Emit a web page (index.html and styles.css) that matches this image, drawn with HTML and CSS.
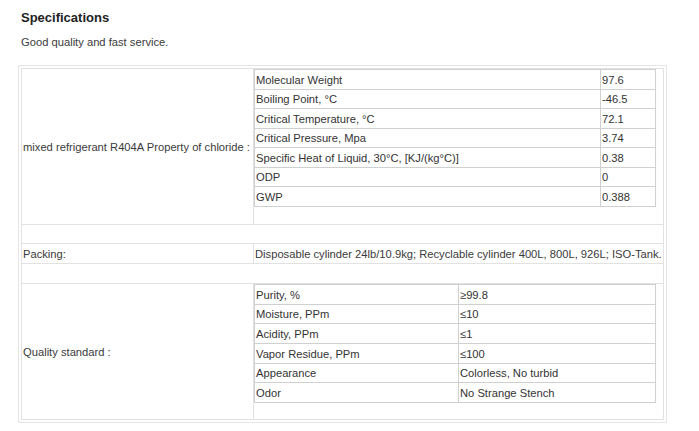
FILE: index.html
```html
<!DOCTYPE html>
<html>
<head>
<meta charset="utf-8">
<link rel="stylesheet" href="styles.css">
</head>
<body>
<div class="page">
  <h2 class="title">Specifications</h2>
  <p class="intro">Good quality and fast service.</p>
  <div class="frame">
    <table class="outer">
      <tr class="r-prop">
        <td class="label">mixed refrigerant R404A Property of chloride :</td>
        <td class="holder">
          <table class="inner inner1">
            <tr class="h20"><td class="k">Molecular Weight</td><td class="v">97.6</td></tr>
            <tr class="h19"><td class="k">Boiling Point, °C</td><td class="v">-46.5</td></tr>
            <tr class="h20"><td class="k">Critical Temperature, °C</td><td class="v">72.1</td></tr>
            <tr class="h19"><td class="k">Critical Pressure, Mpa</td><td class="v">3.74</td></tr>
            <tr class="h20"><td class="k">Specific Heat of Liquid, 30°C, [KJ/(kg°C)]</td><td class="v">0.38</td></tr>
            <tr class="h19"><td class="k">ODP</td><td class="v">0</td></tr>
            <tr class="h20"><td class="k">GWP</td><td class="v">0.388</td></tr>
          </table>
          <div class="spacer"></div>
        </td>
      </tr>
      <tr class="r-empty"><td colspan="2"></td></tr>
      <tr class="r-pack">
        <td class="label">Packing:</td>
        <td class="text">Disposable cylinder 24lb/10.9kg; Recyclable cylinder 400L, 800L, 926L; ISO-Tank.</td>
      </tr>
      <tr class="r-empty2"><td colspan="2"></td></tr>
      <tr class="r-qual">
        <td class="label">Quality standard :</td>
        <td class="holder">
          <table class="inner inner2">
            <tr class="h20"><td class="k">Purity, %</td><td class="v">≥99.8</td></tr>
            <tr class="h19"><td class="k">Moisture, PPm</td><td class="v">≤10</td></tr>
            <tr class="h20"><td class="k">Acidity, PPm</td><td class="v">≤1</td></tr>
            <tr class="h20"><td class="k">Vapor Residue, PPm</td><td class="v">≤100</td></tr>
            <tr class="h19"><td class="k">Appearance</td><td class="v">Colorless, No turbid</td></tr>
            <tr class="h20"><td class="k">Odor</td><td class="v">No Strange Stench</td></tr>
          </table>
          <div class="spacer2"></div>
        </td>
      </tr>
    </table>
  </div>
</div>
</body>
</html>
```

FILE: styles.css
```css
html, body {
  margin: 0;
  padding: 0;
  background: #ffffff;
}
body {
  font-family: "Liberation Sans", Arial, sans-serif;
  color: #333333;
  font-size: 11.2px;
}
.page {
  padding: 9px 0 0 18px;
}
.title {
  margin: 0 0 0 3px;
  font-size: 13px;
  font-weight: bold;
  color: #222222;
  line-height: 18px;
}
.intro {
  margin: 8px 0 0 3px;
  font-size: 11.2px;
  line-height: 14px;
  color: #3a3a3a;
}
.frame {
  margin-top: 16px;
  width: 643px;
  border: 1px solid #e4e4e4;
  padding: 2px;
}
.outer {
  width: 643px;
  border-collapse: collapse;
  table-layout: fixed;
}
.outer > tbody > tr > td {
  border: 1px solid #e2e2e2;
  padding: 0;
  vertical-align: middle;
  font-size: 11.2px;
  color: #3a3a3a;
}
.outer td.label {
  width: 230px;
  padding-left: 1px;
  white-space: nowrap;
}
.outer td.text {
  padding-left: 1px;
  white-space: nowrap;
}
.r-empty > td { height: 18px; }
.r-pack > td { height: 19px; }
.r-empty2 > td { height: 19px; }
.inner {
  border-collapse: collapse;
  width: 402px;
  table-layout: fixed;
}
.inner td {
  border: 1px solid #d0d0d0;
  padding: 0 0 0 1px;
  font-size: 11.2px;
  vertical-align: middle;
  white-space: nowrap;
  line-height: 14px;
  color: #333333;
}
.inner1 td.v { width: 53px; }
.inner2 td.v { width: 195px; }
.h20 > td { height: 19px; }
.h19 > td { height: 18px; }
.spacer { height: 17px; }
.spacer2 { height: 16px; }
```
